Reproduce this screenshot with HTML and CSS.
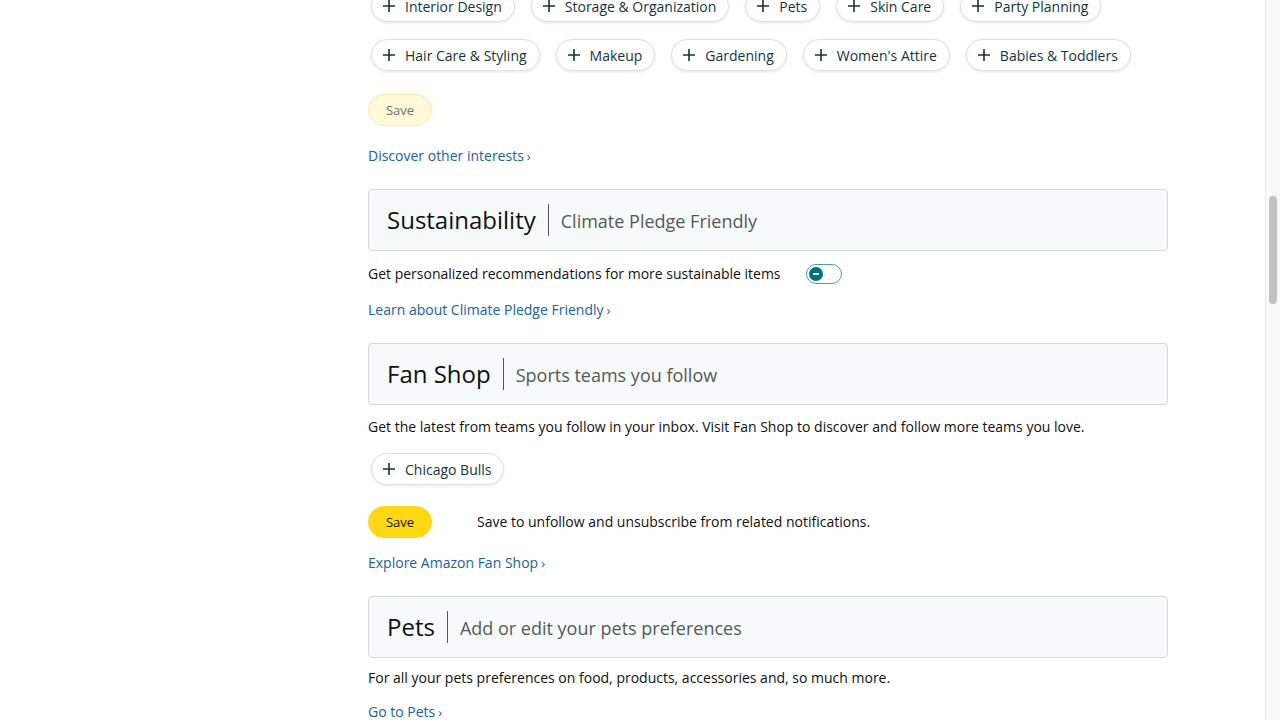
FILE: index.html
```html
<!DOCTYPE html>
<html lang="en">
<head>
<meta charset="utf-8">
<title>Communication preferences</title>
<link rel="stylesheet" href="styles.css">
</head>
<body>
<main class="content">
  <div class="chips chips-top">
    <button class="chip"><svg class="plus" viewBox="0 0 12 12"><path d="M6 0v12M0 6h12"/></svg>Interior Design</button>
    <button class="chip"><svg class="plus" viewBox="0 0 12 12"><path d="M6 0v12M0 6h12"/></svg>Storage &amp; Organization</button>
    <button class="chip"><svg class="plus" viewBox="0 0 12 12"><path d="M6 0v12M0 6h12"/></svg>Pets</button>
    <button class="chip"><svg class="plus" viewBox="0 0 12 12"><path d="M6 0v12M0 6h12"/></svg>Skin Care</button>
    <button class="chip"><svg class="plus" viewBox="0 0 12 12"><path d="M6 0v12M0 6h12"/></svg>Party Planning</button>
    <button class="chip"><svg class="plus" viewBox="0 0 12 12"><path d="M6 0v12M0 6h12"/></svg>Hair Care &amp; Styling</button>
    <button class="chip"><svg class="plus" viewBox="0 0 12 12"><path d="M6 0v12M0 6h12"/></svg>Makeup</button>
    <button class="chip"><svg class="plus" viewBox="0 0 12 12"><path d="M6 0v12M0 6h12"/></svg>Gardening</button>
    <button class="chip"><svg class="plus" viewBox="0 0 12 12"><path d="M6 0v12M0 6h12"/></svg>Women's Attire</button>
    <button class="chip"><svg class="plus" viewBox="0 0 12 12"><path d="M6 0v12M0 6h12"/></svg>Babies &amp; Toddlers</button>
  </div>

  <div class="save-row save-row-interests">
    <button class="btn-save btn-disabled" disabled>Save</button>
  </div>
  <a class="link link-discover" href="#">Discover other interests<span class="chev">›</span></a>

  <section class="section section-sustain">
    <div class="section-head">
      <h2 class="section-title">Sustainability</h2>
      <span class="section-divider"></span>
      <span class="section-sub">Climate Pledge Friendly</span>
    </div>
    <div class="toggle-row">
      <p class="text">Get personalized recommendations for more sustainable items</p>
      <span class="toggle"><span class="knob"></span></span>
    </div>
    <a class="link link-after-toggle" href="#">Learn about Climate Pledge Friendly<span class="chev">›</span></a>
  </section>

  <section class="section section-fan">
    <div class="section-head">
      <h2 class="section-title">Fan Shop</h2>
      <span class="section-divider"></span>
      <span class="section-sub">Sports teams you follow</span>
    </div>
    <p class="text text-fan">Get the latest from teams you follow in your inbox. Visit Fan Shop to discover and follow more teams you love.</p>
    <div class="chips chips-fan">
      <button class="chip"><svg class="plus" viewBox="0 0 12 12"><path d="M6 0v12M0 6h12"/></svg>Chicago Bulls</button>
    </div>
    <div class="save-row save-row-fan">
      <button class="btn-save">Save</button>
      <span class="save-note">Save to unfollow and unsubscribe from related notifications.</span>
    </div>
    <a class="link link-explore" href="#">Explore Amazon Fan Shop<span class="chev">›</span></a>
  </section>

  <section class="section section-pets">
    <div class="section-head">
      <h2 class="section-title">Pets</h2>
      <span class="section-divider"></span>
      <span class="section-sub">Add or edit your pets preferences</span>
    </div>
    <p class="text text-pets">For all your pets preferences on food, products, accessories and, so much more.</p>
    <a class="link link-pets" href="#">Go to Pets<span class="chev">›</span></a>
  </section>
</main>
<div class="scrollbar"><div class="scroll-thumb"></div></div>
</body>
</html>
```
FILE: styles.css
```css
html, body {
  margin: 0;
  padding: 0;
  background: #ffffff;
  overflow: hidden;
  height: 720px;
}

body {
  font-family: "Open Sans", "Liberation Sans", Arial, sans-serif;
  color: #0f1111;
  font-size: 14px;
  line-height: 20px;
}

.content {
  width: 800px;
  margin-left: 368px;
  display: flex;
  flex-direction: column;
  align-items: flex-start;
}

.chips {
  display: flex;
  flex-wrap: wrap;
  gap: 17px 16px;
  padding-left: 3px;
}

.chips-top {
  margin-top: -10px;
  width: 790px;
}

.chip {
  display: inline-flex;
  align-items: center;
  gap: 10px;
  height: 32px;
  box-sizing: border-box;
  padding: 0 12px 0 11px;
  border: 1px solid #dde2e2;
  border-radius: 16px;
  background: #ffffff;
  box-shadow: 0 1px 3px rgba(15, 17, 17, 0.1);
  font-family: inherit;
  font-size: 14px;
  color: #16353a;
  cursor: pointer;
  white-space: nowrap;
}

.plus {
  width: 12px;
  height: 12px;
  flex: none;
}

.plus path {
  stroke: #16353a;
  stroke-width: 1.6;
  fill: none;
}

.save-row {
  display: flex;
  align-items: center;
}

.save-row-interests {
  margin-top: 23px;
}

.btn-save {
  width: 64px;
  height: 32px;
  box-sizing: border-box;
  border-radius: 16px;
  border: 1px solid #ffd814;
  background: #ffd814;
  font-family: inherit;
  font-size: 13px;
  color: #0f1111;
  padding: 0;
}

.btn-disabled {
  background: #fff8d9;
  border-color: #fcebaa;
  color: #6f7373;
}

.link {
  color: #2162a1;
  text-decoration: none;
  font-size: 14px;
  line-height: 20px;
}

.chev {
  margin-left: 3px;
  font-size: 13px;
}

.link-discover {
  margin-top: 20px;
}

.section {
  display: flex;
  flex-direction: column;
  align-items: flex-start;
  width: 800px;
  margin-top: 23px;
}

.section-head {
  box-sizing: border-box;
  width: 800px;
  height: 62px;
  display: flex;
  align-items: center;
  padding: 0 18px;
  background: #f7fafa;
  border: 1px solid #d5d9d9;
  border-radius: 4px;
}

.section-title {
  margin: 0;
  font-size: 24px;
  font-weight: 400;
  line-height: 32px;
  color: #0f1111;
}

.section-divider {
  width: 1px;
  height: 32px;
  background: #565959;
  margin: 0 12px;
}

.section-sub {
  font-size: 18px;
  line-height: 24px;
  color: #565959;
  padding-top: 2px;
}

.text {
  margin: 0;
  font-size: 14px;
  line-height: 20px;
  color: #0f1111;
}

.toggle-row {
  display: flex;
  align-items: center;
  gap: 25px;
  margin-top: 13px;
}

.toggle {
  position: relative;
  display: block;
  width: 36px;
  height: 20px;
  box-sizing: border-box;
  border: 1.5px solid #4c9aa7;
  border-radius: 10px;
  background: #ffffff;
}

.knob {
  position: absolute;
  left: 2px;
  top: 1.5px;
  width: 14px;
  height: 14px;
  border-radius: 50%;
  background: #00727f;
}

.knob::after {
  content: "";
  position: absolute;
  left: 4px;
  top: 6px;
  width: 6px;
  height: 2px;
  background: #ffffff;
}

.link-after-toggle {
  margin-top: 16px;
}

.text-fan {
  margin-top: 12px;
}

.chips-fan {
  margin-top: 16px;
}

.save-row-fan {
  margin-top: 21px;
  gap: 45px;
}

.save-note {
  font-size: 14px;
  color: #0f1111;
}

.link-explore {
  margin-top: 15px;
}

.text-pets {
  margin-top: 10px;
}

.link-pets {
  margin-top: 14px;
}

.scrollbar {
  position: fixed;
  top: 0;
  right: 0;
  width: 14px;
  height: 720px;
  background: #f9f9f9;
  border-left: 1px solid #e8e8e8;
}

.scroll-thumb {
  position: absolute;
  left: 3px;
  top: 196px;
  width: 8px;
  height: 108px;
  border-radius: 4px;
  background: #c1c1c1;
}
```
